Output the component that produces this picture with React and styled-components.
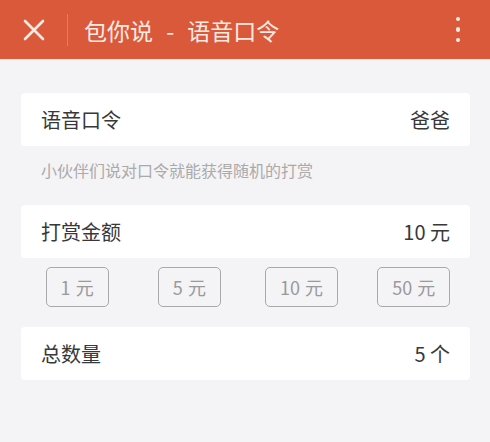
import React from 'react';
import styled, { createGlobalStyle } from 'styled-components';

const GlobalStyle = createGlobalStyle`
  html, body {
    margin: 0;
    padding: 0;
    background: #f4f3f6;
    font-family: "Noto Sans CJK SC", "Noto Sans", sans-serif;
  }
`;

const Page = styled.div`
  width: 490px;
  min-height: 442px;
  background: #f4f3f6;
`;

const Header = styled.header`
  height: 60px;
  background: #da593b;
  display: flex;
  align-items: center;
  color: #fdebe3;
  border-bottom: 1px solid #f7e6e2;
  box-sizing: border-box;
`;

const IconButton = styled.div`
  width: 67px;
  height: 60px;
  display: flex;
  align-items: center;
  justify-content: center;
`;

const Divider = styled.div`
  width: 1px;
  height: 32px;
  background: #e37a61;
`;

const Title = styled.h1`
  flex: 1;
  margin: 0 0 0 16px;
  font-size: 23px;
  font-weight: 400;
  word-spacing: 8px;
  line-height: 60px;
`;

const Dots = styled.div`
  width: 64px;
  display: flex;
  flex-direction: column;
  align-items: center;
  gap: 6px;
`;

const Dot = styled.span`
  width: 4.5px;
  height: 4.5px;
  border-radius: 50%;
  background: #fdebe3;
`;

const Content = styled.main`
  padding: 33px 20px 40px 21px;
`;

const Card = styled.div`
  height: 53px;
  background: #fff;
  border-radius: 4px;
  display: flex;
  align-items: center;
  justify-content: space-between;
  padding: 0 20px;
  font-size: 20px;
  color: #383838;
`;

const Hint = styled.p`
  margin: 0;
  height: 59px;
  box-sizing: border-box;
  padding: 12px 20px 0;
  font-size: 16px;
  line-height: 24px;
  color: #aaa;
`;

const Amounts = styled.div`
  display: grid;
  grid-template-columns: repeat(4, 1fr);
  margin: 9px 0 20px;
`;

const AmountButton = styled.button`
  justify-self: center;
  height: 40px;
  padding: 0 14px;
  border: 1px solid #a9a9a9;
  border-radius: 5px;
  background: transparent;
  font-family: inherit;
  font-size: 18px;
  color: #9a9a9a;
  word-spacing: 1px;
`;

const amounts = ['1 元', '5 元', '10 元', '50 元'];

export default function App() {
  return (
    <Page>
      <GlobalStyle />
      <Header>
        <IconButton>
          <svg width="22" height="22" viewBox="0 0 22 22">
            <path d="M2 2 L20 20 M20 2 L2 20" stroke="#fdebe3" strokeWidth="2.6" strokeLinecap="round" />
          </svg>
        </IconButton>
        <Divider />
        <Title>包你说 - 语音口令</Title>
        <Dots>
          <Dot />
          <Dot />
          <Dot />
        </Dots>
      </Header>
      <Content>
        <Card>
          <span>语音口令</span>
          <span>爸爸</span>
        </Card>
        <Hint>小伙伴们说对口令就能获得随机的打赏</Hint>
        <Card>
          <span>打赏金额</span>
          <span>10 元</span>
        </Card>
        <Amounts>
          {amounts.map(a => (
            <AmountButton key={a}>{a}</AmountButton>
          ))}
        </Amounts>
        <Card>
          <span>总数量</span>
          <span>5 个</span>
        </Card>
      </Content>
    </Page>
  );
}
